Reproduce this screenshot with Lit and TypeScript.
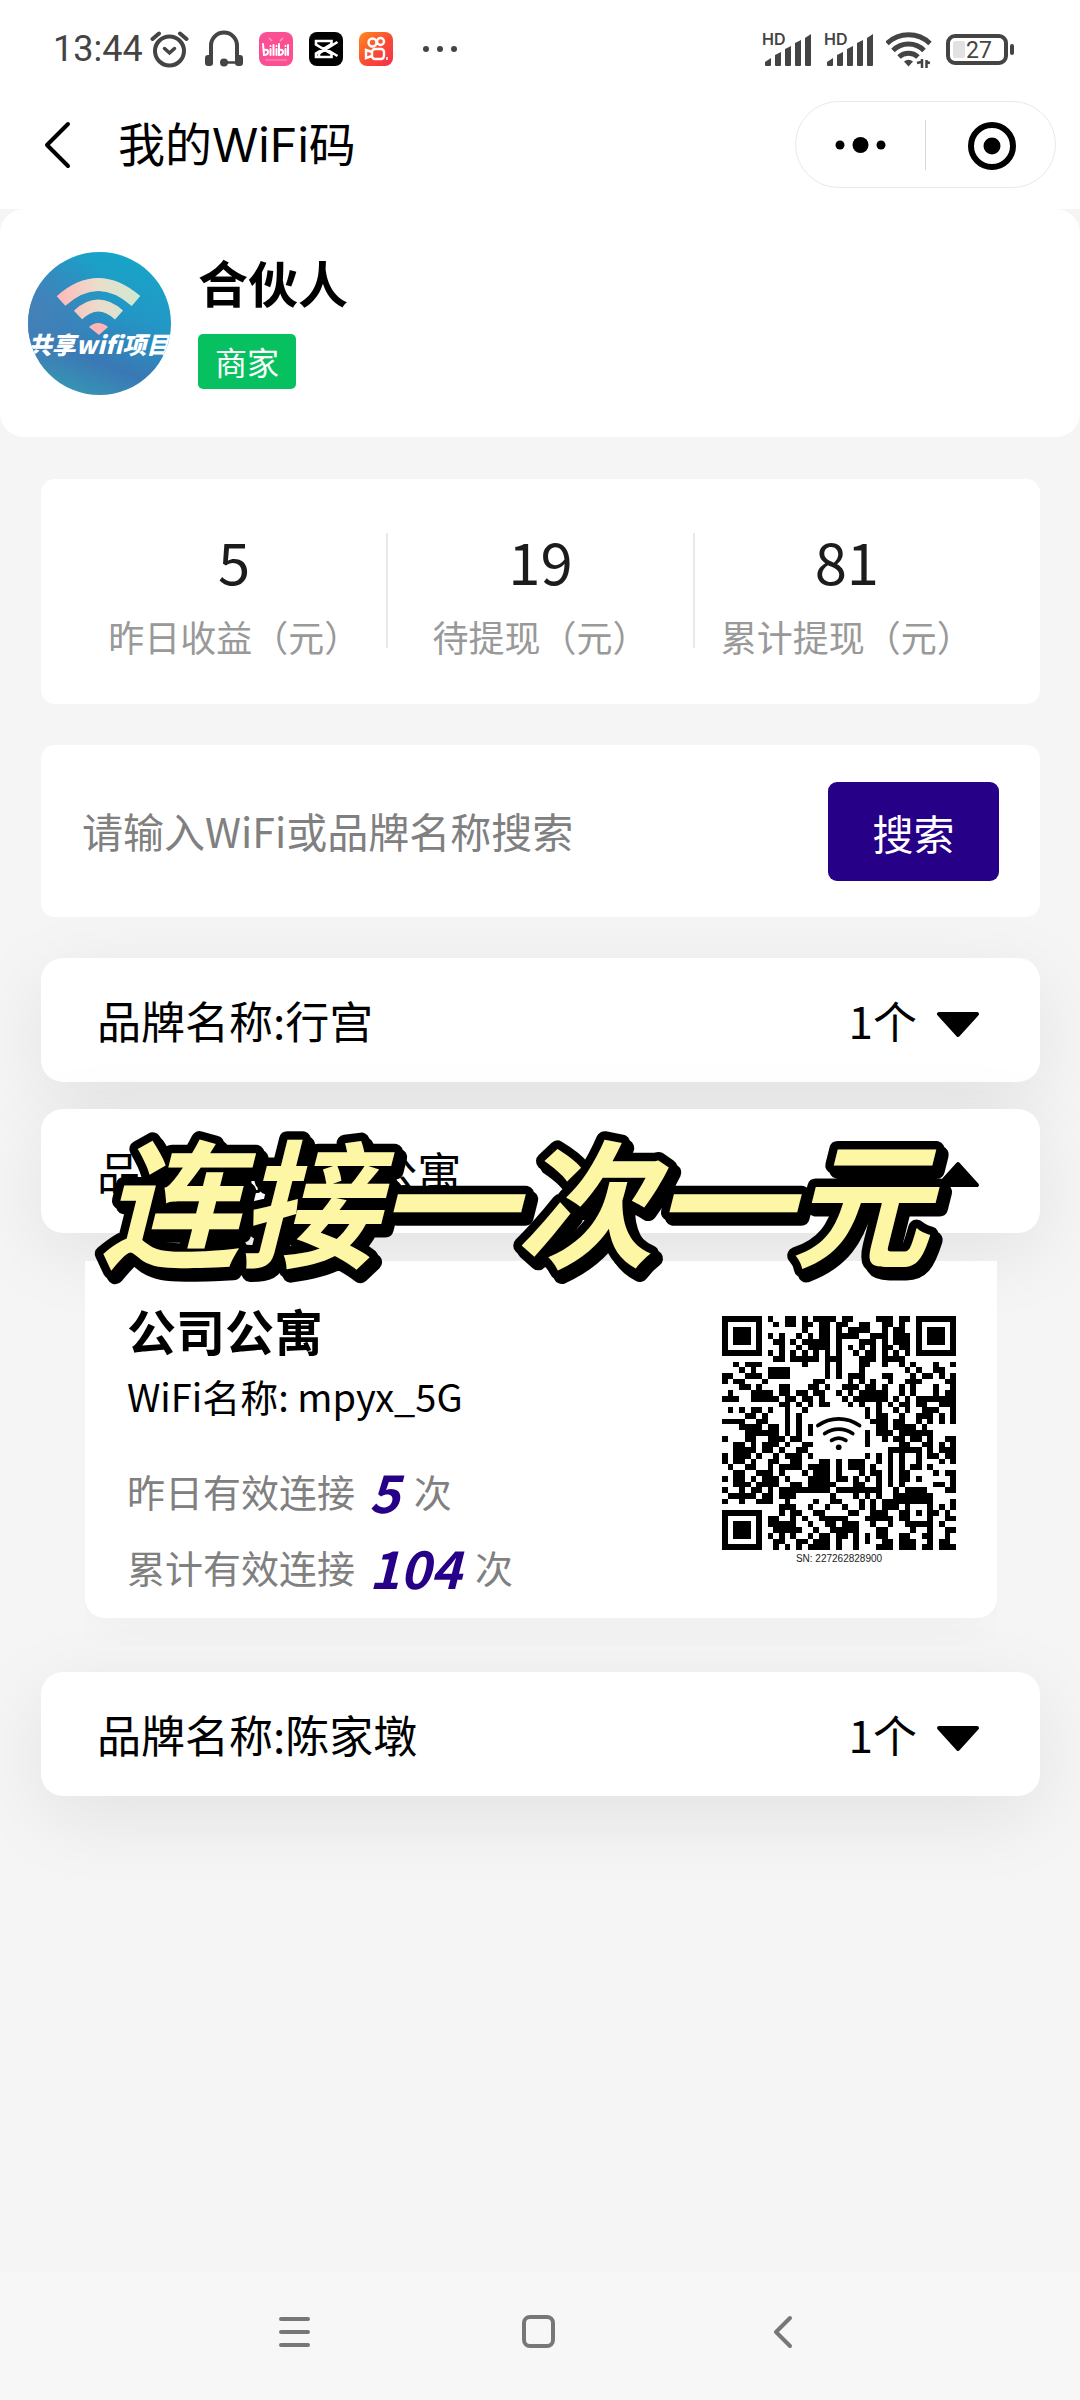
import { LitElement, html, css, svg } from "lit";
import { customElement, property, state } from "lit/decorators.js";

/* Dark modules of the WiFi code, one entry per row, as column ranges.
   Finder patterns are drawn separately. */
const QR_ROWS: string[] = [
  "8 11-12 14 16-19 21-22 27-29 31-32",
  "9 11-12 14-15 17-18 20-21 24-25 28-29 31",
  "14 17-18 20 22-25 28 30-31",
  "8 10 13 15 17-18 20-23 26-28 30-32",
  "9-10 12 14-16 17-18 20 24-26 28 30-32",
  "10 13 15-18 20 22 24 26 28-29 31-32",
  "8 10 12 14 16 18 20 23 25-26 28 30 32",
  "9-10 12-16 18-20 24-26 28-31",
  "2 4-6 14 18 20 24-25 28 31 33 37 40",
  "3 5 8-11 18 20 24 32 34 37-38",
  "0-1 4-6 8-11 18 20 22-24 28-29 33 35-36 38 40",
  "0 2-3 7 16-17 22 24 26 29 32-34 39-40",
  "3-4 6 10-11 15-16 18 21-23 25-26 28 31 33 37 40",
  "1 5-8 10-11 13-14 16-17 20 22 24-28 31 33 37 39-40",
  "0-2 5-9 11-12 14-15 17 21 23-28 30 32 34-40",
  "10-11 13 15 17-18 22 24 27 29 31-32 34-35 38-40",
  "1 3 5-6 8 11 14 25 27 30 32 35-37 40",
  "4-5 7 11 13 25 27-28 31 34-36 38 40",
  "0-3 6-7 11 13 26-28 30-31 34 36 38 40",
  "3-6 8-9 11 13 15 27-28 30-33 35",
  "4-9 11 13 15 25 27-29 31-36",
  "0 4-5 8-10 12-13 25 28 30-31 33-34 36 39-40",
  "2-3 5 7-9 11 14-15 25 31-32 35-36 38 40",
  "2-5 7-8 10 13-14 29-34 36 38-40",
  "0 2-4 6 9 11-13 15 25 27 29 31 34 36-37 39-40",
  "0 2-3 5 8-9 12-13 17-18 20 22-24 27 29 31 34 38 40",
  "1 4-5 8 10-13 15-18 20 22-24 26 29 31 33-34 36",
  "2-3 6-8 10 14 16-18 20 24 26-27 29 31-32 37 39-40",
  "0 2-3 5 7-9 11 15-18 20-21 23 25 27 29 31-32 34 40",
  "2-4 6-9 12-13 15-19 23-24 27 29 31 37-38 40",
  "0 3 5-6 8 10-18 20-27 30 32-35 39-40",
  "1-5 7-8 10-12 19 23 25 27 30-36",
  "0 3 6-8 11 16 19-20 24 26 28-36 40",
  "10-12 15 18 21 24 26 28-30 32 36 38 40",
  "10 12-13 16-17 22-23 26-28 31-32 34 36-37 39",
  "8-9 12 14 17-21 25-29 31-32 36 39-40",
  "8-12 15 18-19 21-23 26 29 32-36 38",
  "9-13 16 19-23 27-28 33 36 39-40",
  "8 10 12 15 17-18 20-21 23 25 27-28 31-32 35-36 39",
  "9-10 13-14 16-18 20 23 25 28-29 31-33 36 38-39",
  "9 11 13 15-18 20 23 27-29 31-33 35-36 38-40",
];

const qrPath = QR_ROWS.map((row, y) =>
  row
    .split(" ")
    .map((run) => {
      const [from, to = from] = run.split("-").map(Number);
      return `M${from} ${y}h${to - from + 1}v1h-${to - from + 1}z`;
    })
    .join("")
).join("");

const finder = (x: number, y: number) => svg`
  <path fill-rule="evenodd" d="M${x} ${y}h7v7h-7zM${x + 1} ${y + 1}v5h5v-5zM${x + 2} ${y + 2}h3v3h-3z"/>`;

interface Brand {
  name: string;
  count: number;
  site?: { title: string; ssid: string; yesterday: number; total: number; sn: string };
}

const BRANDS: Brand[] = [
  { name: "行宫", count: 1 },
  {
    name: "公司公寓",
    count: 1,
    site: { title: "公司公寓", ssid: "mpyx_5G", yesterday: 5, total: 104, sn: "227262828900" },
  },
  { name: "陈家墩", count: 1 },
];

const STATS = [
  { value: 5, label: "昨日收益（元）" },
  { value: 19, label: "待提现（元）" },
  { value: 81, label: "累计提现（元）" },
];

@customElement("status-bar")
export class StatusBar extends LitElement {
  static styles = css`
    :host {
      display: flex;
      justify-content: space-between;
      align-items: center;
      height: 62px;
      padding: 18px 66px 0 53px;
      background: #fff;
      color: #444;
      font-family: Roboto, sans-serif;
    }
    .side { display: flex; align-items: center; gap: 16px; }
    .time { font-size: 36px; line-height: 40px; margin-right: -10px; }
    .more { margin-left: 14px; }
    .tight { gap: 12px; }
    svg { display: block; }
  `;

  private signal() {
    return svg`<svg width="50" height="36" viewBox="0 0 50 36" fill="#444" role="img" aria-label="HD signal">
      <text x="0" y="14" font-size="16" font-weight="600" font-family="Inter, sans-serif">HD</text>
      <path d="M3 34v-3l6-4v7q0 1-1 1H4q-1 0-1-1zM13 34V24l6-3v13q0 1-1 1h-4q-1 0-1-1zM23 34V18l6-3v19q0 1-1 1h-4q-1 0-1-1zM33 34V12l6-3v25q0 1-1 1h-4q-1 0-1-1zM43 34V7l6-4v31q0 1-1 1h-4q-1 0-1-1z"/>
    </svg>`;
  }

  render() {
    return html`
      <div class="side">
        <time class="time">13:44</time>
        <svg width="40" height="38" viewBox="0 0 40 38" fill="none" stroke="#444" stroke-width="4" stroke-linecap="round">
          <circle cx="20.500" cy="21" r="14.500" />
          <path d="M3.500 9L10 3.500M37.500 9L31 3.500" />
          <path d="M15.500 18.500l5 4.500 5-4.500" stroke-width="3.500" />
        </svg>
        <svg width="38" height="38" viewBox="0 0 38 38" fill="none" stroke="#444" stroke-width="4">
          <path d="M6 30V15.500a13 13 0 0 1 26 0V30" />
          <rect x="0" y="25" width="8" height="11" rx="3" fill="#444" stroke="none" />
          <rect x="30" y="25" width="8" height="11" rx="3" fill="#444" stroke="none" />
          <path d="M19 32.500h13" stroke-width="2.500" />
          <circle cx="19" cy="32.500" r="4" fill="#444" stroke="none" />
        </svg>
        <svg width="34" height="34" viewBox="0 0 34 34" role="img" aria-label="bilibili">
          <rect width="34" height="34" rx="8" fill="#fb4f93" />
          <path d="M10 6l3 3M24 6l-3 3" stroke="#ff9cc3" stroke-width="1.500" />
          <g fill="none" stroke="#fff" stroke-width="2" stroke-linecap="round">
            <path d="M4 12l1 11q4 0 4-3t-4-2M11.500 17v6M11.500 14v.1M14.500 13v10M17.500 17v6M17.500 14v.1M20 12v11q4 0 4-3t-4-2M26.500 17v6M26.500 14v.1M29 13v10" />
          </g>
          <path d="M6 28h22" stroke="#ff7fb2" stroke-width="1.500" />
        </svg>
        <svg width="34" height="34" viewBox="0 0 34 34" role="img" aria-label="CapCut">
          <rect width="34" height="34" rx="8" fill="#000" />
          <path d="M28.500 10L10 21.500V25h12.500v-3L7 12.500V9h15.500v3L7 21.500V25H12M28.500 24L17 17" fill="none" stroke="#fff" stroke-width="2.600" />
        </svg>
        <svg width="34" height="34" viewBox="0 0 34 34" role="img" aria-label="Kuaishou">
          <defs>
            <linearGradient id="ks" x1="0" y1="0" x2="1" y2="1">
              <stop offset="0" stop-color="#ff8a1c" />
              <stop offset=".55" stop-color="#f94a35" />
              <stop offset="1" stop-color="#f5304e" />
            </linearGradient>
          </defs>
          <rect width="34" height="34" rx="8" fill="url(#ks)" />
          <g fill="none" stroke="#fff" stroke-width="2.400">
            <circle cx="13.500" cy="10.500" r="4" />
            <circle cx="21.500" cy="9.500" r="3.500" />
            <rect x="13" y="17" width="12" height="10" rx="3" />
            <path d="M13 20l-6-2v8l6-2" />
          </g>
          <path d="M28 25v3" stroke="#fff" stroke-width="1.500" />
        </svg>
        <svg class="more" width="34" height="8" viewBox="0 0 34 8" fill="#444">
          <circle cx="3" cy="4" r="3" /><circle cx="17" cy="4" r="3" /><circle cx="31" cy="4" r="3" />
        </svg>
      </div>
      <div class="side tight">
        ${this.signal()} ${this.signal()}
        <svg width="48" height="38" viewBox="0 0 48 38" fill="none" stroke="#444" stroke-width="5">
          <path d="M1 13.500a31 31 0 0 1 43 0" />
          <path d="M7 20.500a22 22 0 0 1 31 0" />
          <path d="M13 27a14 14 0 0 1 19 0" />
          <path d="M18 31.500q4.500-3.500 9 0l-4.500 5z" fill="#444" stroke="none" />
          <path d="M31 33l4-1M36 29v9M44 33l-4-1M40.500 38v-8" stroke-width="2.500" />
        </svg>
        <svg width="68" height="34" viewBox="0 0 68 34" role="img" aria-label="Battery 27">
          <rect x="2" y="4" width="58" height="27" rx="7" fill="none" stroke="#444" stroke-width="4" />
          <rect x="7" y="9" width="12" height="17" rx="2" fill="#e2e2e2" />
          <rect x="64" y="12" width="4" height="11" rx="2" fill="#444" />
          <text x="20" y="26" font-size="23" font-family="Roboto, sans-serif" fill="#444">27</text>
        </svg>
      </div>
    `;
  }
}

@customElement("nav-header")
export class NavHeader extends LitElement {
  static styles = css`
    :host {
      display: flex;
      align-items: center;
      height: 129px;
      padding: 0 24px 0 40px;
      background: #fff;
    }
    button { border: 0; background: none; padding: 0; display: grid; place-items: center; cursor: pointer; }
    .back { width: 36px; height: 60px; }
    h1 {
      flex: 1;
      margin: 0 0 0 42px;
      font: 400 47px/64px Inter, "Noto Sans CJK SC", sans-serif;
      color: #000;
    }
    .capsule {
      display: flex;
      align-items: center;
      box-sizing: border-box;
      width: 261px;
      height: 87px;
      border: 1px solid #e9e9e9;
      border-radius: 44px;
    }
    .capsule button { flex: 1; height: 100%; }
    .line { width: 1px; height: 50px; background: #d8d8d8; }
  `;

  render() {
    return html`
      <button class="back" aria-label="返回">
        <svg width="32" height="48" viewBox="0 0 32 48" fill="none" stroke="#000" stroke-width="4" stroke-linecap="round" stroke-linejoin="round">
          <path d="M26 3L5 24l21 21" />
        </svg>
      </button>
      <h1>我的WiFi码</h1>
      <div class="capsule">
        <button aria-label="更多">
          <svg width="52" height="18" viewBox="0 0 52 18">
            <circle cx="5" cy="9" r="4.500" /><circle cx="25.500" cy="9" r="8" /><circle cx="46" cy="9" r="4.500" />
          </svg>
        </button>
        <span class="line"></span>
        <button aria-label="关闭">
          <svg width="50" height="50" viewBox="0 0 50 50">
            <circle cx="26" cy="26" r="21" fill="none" stroke="#000" stroke-width="6" />
            <circle cx="26" cy="26" r="8.500" />
          </svg>
        </button>
      </div>
    `;
  }
}

@customElement("wifi-code")
export class WifiCode extends LitElement {
  static styles = css`
    :host { display: flex; flex-direction: column; align-items: center; gap: 3px; }
    svg { display: block; }
    span { font: 10px/12px "Liberation Sans", sans-serif; color: #222; }
  `;

  @property() sn = "";

  render() {
    return html`
      <svg width="234" height="234" viewBox="0 0 41 41" shape-rendering="crispEdges" role="img" aria-label="WiFi码">
        <path d=${qrPath} />
        ${finder(0, 0)} ${finder(34, 0)} ${finder(0, 34)}
        <path d="M16 16.300h8.500v8H16z" fill="#fff" />
        <g fill="none" stroke="#000" stroke-width=".65" stroke-linecap="round" shape-rendering="auto">
          <path d="M16.800 19.200a6.200 6.200 0 0 1 7.300 0" />
          <path d="M18 20.600a4.300 4.300 0 0 1 4.900 0" />
          <path d="M19.200 21.800a2.300 2.300 0 0 1 2.500 0" />
          <circle cx="20.450" cy="23" r=".5" fill="#000" stroke="none" />
        </g>
      </svg>
      <span>SN: ${this.sn}</span>
    `;
  }
}

@customElement("app-root")
export class AppRoot extends LitElement {
  static styles = css`
    :host {
      display: flex;
      flex-direction: column;
      min-height: 100vh;
      background: #f5f5f5;
      color: #000;
      font-family: "Noto Sans CJK SC", sans-serif;
    }
    main { flex: 1; }
    button { font-family: inherit; color: inherit; border: 0; cursor: pointer; }

    .profile {
      display: flex;
      align-items: center;
      gap: 27px;
      height: 228px;
      padding: 0 28px;
      background: #fff;
      border-radius: 24px;
    }
    .avatar { display: block; width: 143px; height: 143px; border-radius: 50%; }
    .identity {
      display: flex;
      flex-direction: column;
      align-items: flex-start;
      gap: 24px;
      padding-bottom: 5px;
    }
    h2 { margin: 0; font-size: 50px; line-height: 58px; font-weight: 700; }
    .tag {
      padding: 0 17px;
      border-radius: 5px;
      background: #07c160;
      color: #fff;
      font-size: 32px;
      line-height: 55px;
    }

    .content { display: flex; flex-direction: column; gap: 41px; padding: 42px 40px 0 41px; }
    .panel { background: #fff; border-radius: 14px; }

    .stats { display: flex; align-items: flex-start; padding: 49px 41px 44px; }
    .stat { flex: 1; display: flex; flex-direction: column; align-items: center; gap: 20px; margin: 0; }
    .stat dt { order: 2; font-size: 36px; line-height: 48px; color: #999; white-space: nowrap; }
    .stat dd { margin: 0; font-size: 58px; line-height: 64px; color: #1c1c1c; }
    .rule { width: 2px; height: 115px; margin-top: 5px; background: #e9e9e9; }

    .search { display: flex; align-items: center; gap: 24px; padding: 37px 41px 36px; }
    .search input {
      flex: 1;
      min-width: 0;
      height: 72px;
      margin-bottom: 4px;
      padding: 0;
      border: 0;
      outline: 0;
      background: none;
      font: 400 41px/60px "Noto Sans CJK SC", sans-serif;
      color: #000;
    }
    .search input::placeholder { color: #808080; opacity: 1; }
    .search button {
      width: 171px;
      height: 99px;
      padding: 0;
      border-radius: 9px;
      background: #260086;
      color: #fff;
      font-size: 41px;
    }

    .brands { display: flex; flex-direction: column; gap: 27px; }
    .brand { position: relative; display: flex; flex-direction: column; }
    .brand-row {
      display: flex;
      align-items: center;
      width: 100%;
      height: 124px;
      padding: 0 59px 0 56px;
      border-radius: 22px;
      background: #fff;
      box-shadow: 0 20px 80px rgba(0, 0, 0, 0.08);
      font-size: 44px;
      line-height: 62px;
    }
    .brand-name { flex: 1; text-align: left; }
    .arrow { margin: 8px 0 0 18px; width: 46px; height: 30px; }
    .arrow.open { transform: rotate(180deg); }

    .sites {
      position: relative;
      margin: 28px 43px 0 44px;
      padding-bottom: 27px;
      background: #f6f6f6;
      overflow: hidden;
    }
    .site {
      display: flex;
      justify-content: space-between;
      align-items: flex-start;
      padding: 37px 41px 13px 42px;
      background: #fff;
      border-radius: 0 0 20px 20px;
      box-shadow: 0 20px 60px rgba(0, 0, 0, 0.03);
    }
    h3 { margin: 0; font-size: 49px; line-height: 64px; font-weight: 700; }
    .ssid { margin: 0 0 23px; font-size: 38px; line-height: 68px; }
    .usage {
      display: flex;
      align-items: center;
      gap: 14px;
      margin: 0;
      font-size: 38px;
      line-height: 76px;
      color: #808080;
    }
    .usage b { font-size: 52px; font-style: italic; font-weight: 700; color: #260086; }
    wifi-code { margin-top: 18px; }

    .caption {
      position: absolute;
      top: 0;
      left: 0;
      width: 998px;
      height: 190px;
      overflow: visible;
      pointer-events: none;
      z-index: 2;
      filter: drop-shadow(4px 5px 0 #000);
    }
    .caption text {
      font: italic 700 138px "Noto Sans CJK SC", sans-serif;
      fill: #fdf6a4;
      stroke: #000;
      stroke-width: 17px;
      stroke-linejoin: round;
      paint-order: stroke;
    }

    .system {
      display: grid;
      grid-template-columns: repeat(3, minmax(0, 245px));
      justify-content: center;
      height: 128px;
      background: #f7f7f7;
    }
    .system button { display: grid; place-items: center; padding: 0 2px 8px 0; background: none; }
    .system svg { fill: none; stroke: #777; stroke-width: 4; stroke-linecap: round; stroke-linejoin: round; }
  `;

  @state() private openBrand = "公司公寓";

  private toggle(name: string) {
    this.openBrand = this.openBrand === name ? "" : name;
  }

  private renderAvatar() {
    return html`
      <svg class="avatar" viewBox="0 0 143 143" role="img" aria-label="共享wifi项目">
        <defs>
          <linearGradient id="sky" x1=".75" y1="0" x2=".35" y2="1">
            <stop offset="0" stop-color="#16a6c9" />
            <stop offset=".4" stop-color="#2396c5" />
            <stop offset=".75" stop-color="#3a78b5" />
            <stop offset="1" stop-color="#3795b4" />
          </linearGradient>
          <radialGradient id="haze" cx=".05" cy=".4" r=".5">
            <stop offset="0" stop-color="#4580b8" />
            <stop offset="1" stop-color="#4580b8" stop-opacity="0" />
          </radialGradient>
          <linearGradient id="wave" gradientUnits="userSpaceOnUse" x1="30" y1="50" x2="110" y2="40">
            <stop offset="0" stop-color="#ffb9b9" />
            <stop offset=".5" stop-color="#ecdccb" />
            <stop offset="1" stop-color="#cfe8cf" />
          </linearGradient>
        </defs>
        <rect width="143" height="143" fill="url(#sky)" />
        <rect width="143" height="143" fill="url(#haze)" />
        <g fill="none" stroke="url(#wave)">
          <path d="M33 49q37-33 75 0" stroke-width="13" />
          <path d="M50 63q20-19 41 0" stroke-width="12" />
        </g>
        <path d="M61 75q9-8 19 0l-9 8z" fill="#ffb5b5" />
        <text x="71" y="102" text-anchor="middle" font-size="24" font-weight="900" font-style="italic"
          font-family="Noto Sans CJK SC, sans-serif" fill="#fff">共享wifi项目</text>
      </svg>
    `;
  }

  private renderSite(site: NonNullable<Brand["site"]>) {
    return html`
      <div class="sites">
        <article class="site">
          <div>
            <h3>${site.title}</h3>
            <p class="ssid">WiFi名称: ${site.ssid}</p>
            <p class="usage"><span>昨日有效连接</span><b>${site.yesterday}</b><span>次</span></p>
            <p class="usage"><span>累计有效连接</span><b>${site.total}</b><span>次</span></p>
          </div>
          <wifi-code sn=${site.sn}></wifi-code>
        </article>
      </div>
      <svg class="caption" viewBox="0 0 998 190"><text x="60" y="148">连接一次一元</text></svg>
    `;
  }

  private renderBrand(brand: Brand) {
    const open = brand.name === this.openBrand;
    return html`
      <section class="brand">
        <button class="brand-row" aria-expanded=${open} @click=${() => this.toggle(brand.name)}>
          <span class="brand-name">品牌名称:${brand.name}</span>
          <span>${brand.count}个</span>
          <svg class="arrow ${open ? "open" : ""}" viewBox="0 0 46 30">
            <path d="M4 5h38L23 26z" stroke="#000" stroke-width="4" stroke-linejoin="round" />
          </svg>
        </button>
        ${open && brand.site ? this.renderSite(brand.site) : ""}
      </section>
    `;
  }

  render() {
    return html`
      <status-bar></status-bar>
      <nav-header></nav-header>
      <main>
        <section class="profile">
          ${this.renderAvatar()}
          <div class="identity">
            <h2>合伙人</h2>
            <span class="tag">商家</span>
          </div>
        </section>
        <div class="content">
          <section class="panel stats">
            ${STATS.map(
              (s, i) => html`
                ${i ? html`<span class="rule"></span>` : ""}
                <dl class="stat"><dt>${s.label}</dt><dd>${s.value}</dd></dl>
              `
            )}
          </section>
          <form class="panel search" @submit=${(e: Event) => e.preventDefault()}>
            <input type="text" aria-label="搜索" placeholder="请输入WiFi或品牌名称搜索" />
            <button type="submit">搜索</button>
          </form>
          <div class="brands">${BRANDS.map((b) => this.renderBrand(b))}</div>
        </div>
      </main>
      <nav class="system">
        <button aria-label="菜单">
          <svg width="34" height="36" viewBox="0 0 34 36"><path d="M4 5h27M4 18h27M4 31h27" /></svg>
        </button>
        <button aria-label="主页">
          <svg width="36" height="36" viewBox="0 0 36 36"><rect x="3" y="3" width="29" height="29" rx="6" /></svg>
        </button>
        <button aria-label="返回">
          <svg width="24" height="36" viewBox="0 0 24 36"><path d="M18 4L4 18l14 14" /></svg>
        </button>
      </nav>
    `;
  }
}
